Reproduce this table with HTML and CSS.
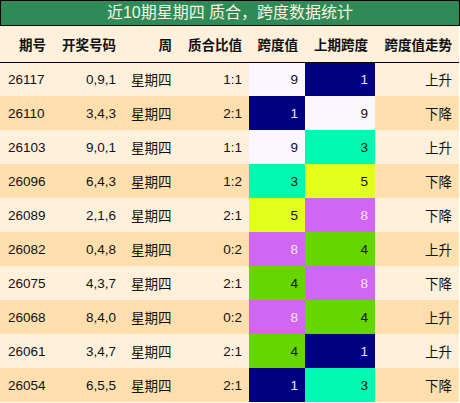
FILE: index.html
```html
<!DOCTYPE html>
<html lang="zh-CN">
<head>
  <meta charset="UTF-8" />
  <title>近10期星期四 质合，跨度数据统计</title>
  <link rel="stylesheet" href="styles.css">
</head>
<body>

  <div class="title">近10期星期四 质合，跨度数据统计</div>

  <table class="stats">
    <thead>
      <tr>
        <th class="c-no">期号</th>
        <th class="c-num">开奖号码</th>
        <th class="c-week">周</th>
        <th class="c-ratio">质合比值</th>
        <th class="c-span">跨度值</th>
        <th class="c-prev">上期跨度</th>
        <th class="c-trend">跨度值走势</th>
      </tr>
    </thead>
    <tbody>
      <tr>
        <td class="left">26117</td><td>0,9,1</td><td class="left">星期四</td><td>1:1</td>
        <td class="v9">9</td><td class="v1">1</td><td>上升</td>
      </tr>
      <tr>
        <td class="left">26110</td><td>3,4,3</td><td class="left">星期四</td><td>2:1</td>
        <td class="v1">1</td><td class="v9">9</td><td>下降</td>
      </tr>
      <tr>
        <td class="left">26103</td><td>9,0,1</td><td class="left">星期四</td><td>1:1</td>
        <td class="v9">9</td><td class="v3">3</td><td>上升</td>
      </tr>
      <tr>
        <td class="left">26096</td><td>6,4,3</td><td class="left">星期四</td><td>1:2</td>
        <td class="v3">3</td><td class="v5">5</td><td>下降</td>
      </tr>
      <tr>
        <td class="left">26089</td><td>2,1,6</td><td class="left">星期四</td><td>2:1</td>
        <td class="v5">5</td><td class="v8">8</td><td>下降</td>
      </tr>
      <tr>
        <td class="left">26082</td><td>0,4,8</td><td class="left">星期四</td><td>0:2</td>
        <td class="v8">8</td><td class="v4">4</td><td>上升</td>
      </tr>
      <tr>
        <td class="left">26075</td><td>4,3,7</td><td class="left">星期四</td><td>2:1</td>
        <td class="v4">4</td><td class="v8">8</td><td>下降</td>
      </tr>
      <tr>
        <td class="left">26068</td><td>8,4,0</td><td class="left">星期四</td><td>0:2</td>
        <td class="v8">8</td><td class="v4">4</td><td>上升</td>
      </tr>
      <tr>
        <td class="left">26061</td><td>3,4,7</td><td class="left">星期四</td><td>2:1</td>
        <td class="v4">4</td><td class="v1">1</td><td>上升</td>
      </tr>
      <tr>
        <td class="left">26054</td><td>6,5,5</td><td class="left">星期四</td><td>2:1</td>
        <td class="v1">1</td><td class="v3">3</td><td>下降</td>
      </tr>
    </tbody>
  </table>

</body>
</html>
```

FILE: styles.css
```css
* {
  margin: 0;
  padding: 0;
  box-sizing: border-box;
}

body {
  background-color: #fff;
  font-family: 'Liberation Sans', 'Noto Sans CJK SC', sans-serif;
  width: 460px;
}

.title {
  height: 26px;
  line-height: 24px;
  background-color: #2e8b57;
  border: 1px solid #000;
  color: #fff3e0;
  font-size: 16px;
  text-align: center;
}

.stats {
  width: 459px;
  border-collapse: collapse;
  table-layout: fixed;
  font-size: 13.5px;
  color: #111;
}

.stats th {
  height: 36px;
  background-color: #fff0dc;
  border-bottom: 1px solid #000;
  font-weight: bold;
  text-align: right;
  padding: 0 7px;
}

.stats td {
  height: 34px;
  text-align: right;
  padding: 0 7px 0 8px;
}

.stats td.left {
  text-align: left;
}

.stats tbody tr:nth-child(odd) {
  background-color: #fff0dc;
}

.stats tbody tr:nth-child(even) {
  background-color: #ffdfae;
}

.c-no { width: 53px; }
.c-num { width: 70px; }
.c-week { width: 56px; }
.c-ratio { width: 70px; }
.c-span { width: 56px; }
.c-prev { width: 70px; }
.c-trend { width: 84px; }

/* 跨度值的颜色 */
.stats td.v1 { background-color: #000080; color: #e8e8ff; }
.stats td.v3 { background-color: #00f9b0; }
.stats td.v4 { background-color: #66d600; }
.stats td.v5 { background-color: #e0ff1c; }
.stats td.v8 { background-color: #d066f2; color: #fbeaff; }
.stats td.v9 { background-color: #fcf6ff; }
```
